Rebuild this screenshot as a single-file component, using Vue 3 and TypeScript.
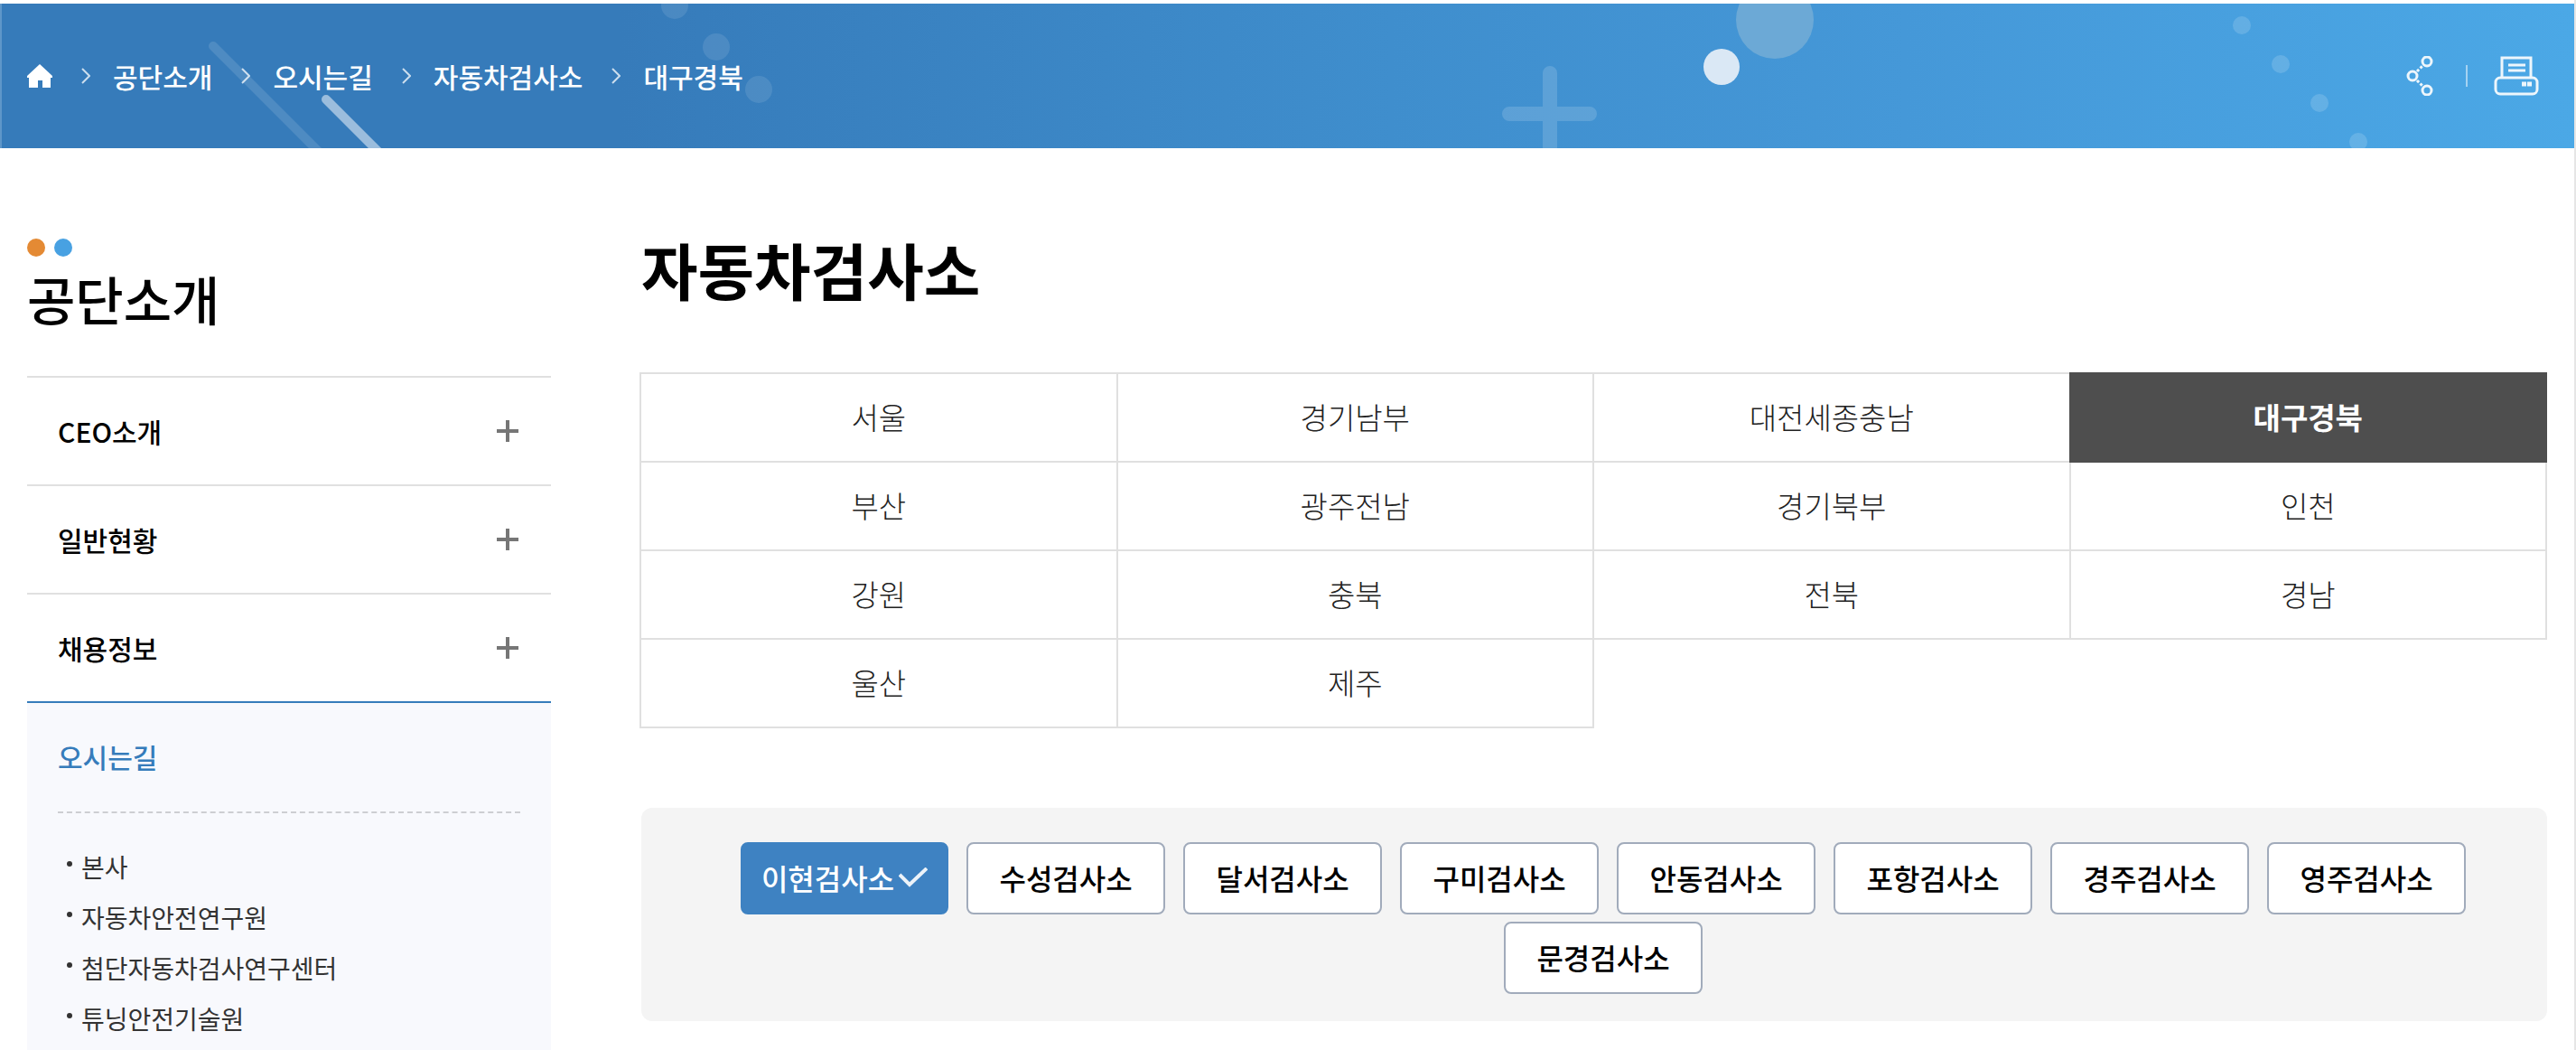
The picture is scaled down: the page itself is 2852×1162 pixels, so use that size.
<script setup lang="ts">
import { ref } from 'vue'

interface MenuItem {
  label: string
  href: string
}

const crumbs: string[] = ['공단소개', '오시는길', '자동차검사소', '대구경북']

const menu: MenuItem[] = [
  { label: 'CEO소개', href: '#ceo' },
  { label: '일반현황', href: '#status' },
  { label: '채용정보', href: '#recruit' },
]

const locations: string[] = ['본사', '자동차안전연구원', '첨단자동차검사연구센터', '튜닝안전기술원']

const regions: string[] = [
  '서울', '경기남부', '대전세종충남', '대구경북',
  '부산', '광주전남', '경기북부', '인천',
  '강원', '충북', '전북', '경남',
  '울산', '제주',
]
const activeRegion = ref('대구경북')

const stations: string[] = [
  '이현검사소', '수성검사소', '달서검사소', '구미검사소', '안동검사소',
  '포항검사소', '경주검사소', '영주검사소', '문경검사소',
]
const activeStation = ref('이현검사소')
</script>

<template>
  <div class="page">
    <header class="banner">
      <svg class="decor" viewBox="2 0 2848 160" preserveAspectRatio="xMidYMid slice" aria-hidden="true">
        <g fill="none" stroke="#fff" stroke-width="10" stroke-linecap="round">
          <path d="M236 47 L356 167" opacity=".12" />
          <path d="M361 106 L421 166" opacity=".5" />
        </g>
        <g fill="#fff" opacity=".1">
          <circle cx="747" cy="2" r="15" />
          <circle cx="793" cy="48" r="15" />
          <circle cx="840" cy="95" r="15" />
        </g>
        <path d="M1671 122 H1760 M1716 77 V180" fill="none" stroke="#fff" stroke-width="16" stroke-linecap="round" opacity=".15" />
        <circle cx="1965" cy="18" r="43" fill="#6ca9d6" />
        <circle cx="1906" cy="70" r="20" fill="#dae8f5" />
        <g fill="#fff" opacity=".15">
          <circle cx="2482" cy="24" r="10" />
          <circle cx="2525" cy="67" r="10" />
          <circle cx="2568" cy="110" r="10" />
          <circle cx="2611" cy="153" r="10" />
        </g>
      </svg>

      <nav class="crumbs" aria-label="breadcrumb">
        <a href="#home" class="home" aria-label="홈">
          <svg width="28" height="26" viewBox="0 0 28 26" aria-hidden="true">
            <path d="M14 0 L28 13 V15 H26 V26 H17 V18 H12 V26 H2 V15 H0 V13 Z" fill="#fff" />
          </svg>
        </a>
        <template v-for="crumb in crumbs" :key="crumb">
          <svg class="chevron" width="10" height="18" viewBox="0 0 10 18" aria-hidden="true">
            <path d="M1 1 L9 9 L1 17" fill="none" stroke="#fff" stroke-width="2" opacity=".75" />
          </svg>
          <a href="#crumb" class="crumb">{{ crumb }}</a>
        </template>
      </nav>

      <div class="tools">
        <button type="button" class="tool" aria-label="공유">
          <svg width="30" height="44" viewBox="0 0 30 44" fill="none" stroke="#fff" stroke-width="3" opacity=".9" aria-hidden="true">
            <circle cx="23" cy="6" r="5" />
            <circle cx="7" cy="22" r="5" />
            <circle cx="23" cy="38" r="5" />
            <path d="M12 17 L18 11 M12 27 L18 33" stroke-dasharray="3 2" />
          </svg>
        </button>
        <span class="bar"></span>
        <button type="button" class="tool" aria-label="인쇄">
          <svg width="50" height="44" viewBox="0 0 50 44" fill="none" stroke="#fff" stroke-width="3" opacity=".9" aria-hidden="true">
            <path d="M9 24 V2 H41 V24" />
            <path d="M16 10 H35 M16 16 H35" />
            <rect x="2" y="24" width="46" height="18" rx="5" />
            <path d="M31 31 H36 M37 31 H42" stroke-width="5" />
          </svg>
        </button>
      </div>
    </header>

    <div class="body">
      <aside class="side">
        <div class="dots"><span class="dot orange"></span><span class="dot blue"></span></div>
        <h2 class="side-title">공단소개</h2>
        <nav class="menu">
          <a v-for="item in menu" :key="item.label" :href="item.href" class="menu-item">
            {{ item.label }}
            <svg width="24" height="24" viewBox="0 0 24 24" aria-hidden="true">
              <path d="M12 0 V24 M0 12 H24" stroke="#767676" stroke-width="4" />
            </svg>
          </a>
          <div class="open">
            <a href="#way" class="open-title">오시는길</a>
            <ul class="sub">
              <li v-for="place in locations" :key="place"><a href="#place">{{ place }}</a></li>
            </ul>
          </div>
        </nav>
      </aside>

      <main class="main">
        <h1 class="title">자동차검사소</h1>
        <ul class="regions">
          <li v-for="region in regions" :key="region" :class="{ on: region === activeRegion }">
            <button type="button" @click="activeRegion = region">{{ region }}</button>
          </li>
        </ul>
        <div class="stations">
          <button
            v-for="station in stations"
            :key="station"
            type="button"
            class="station"
            :class="{ on: station === activeStation }"
            @click="activeStation = station"
          >
            {{ station }}
            <svg v-if="station === activeStation" width="32" height="22" viewBox="0 0 32 22" aria-hidden="true">
              <path d="M1 8 L12 19 L31 1" fill="none" stroke="#fff" stroke-width="4" opacity=".9" />
            </svg>
          </button>
        </div>
      </main>
    </div>
  </div>
</template>

<style>
body {
  margin: 0;
  background: #fff;
}
</style>

<style scoped>
.page {
  box-sizing: border-box;
  min-height: 100vh;
  display: flex;
  flex-direction: column;
  padding-top: 4px;
  border-right: 2px solid #e6e6e6;
  font-family: "Noto Sans CJK KR", sans-serif;
  color: #000;
}
a {
  color: inherit;
  text-decoration: none;
}
button {
  font: inherit;
  color: inherit;
  cursor: pointer;
}
ul {
  list-style: none;
  margin: 0;
  padding: 0;
}
svg {
  display: block;
  flex: none;
}

.banner {
  box-sizing: border-box;
  position: relative;
  height: 160px;
  padding: 0 39px 0 28px;
  border-left: 2px solid #5e96c9;
  display: flex;
  align-items: center;
  justify-content: space-between;
  color: #fff;
  background: linear-gradient(90deg, #367bba 0%, #367bba 24%, #3f8ecd 54%, #4598d8 74%, #4ba8e6 100%);
}
.decor {
  position: absolute;
  inset: 0;
  width: 100%;
  height: 100%;
}
.crumbs,
.tools {
  position: relative;
  display: flex;
  align-items: center;
}
.chevron {
  margin: 0 25px 0 32px;
}
.crumb {
  font-size: 30px;
  line-height: 44px;
  font-weight: 500;
}
.tool {
  padding: 0;
  border: 0;
  background: none;
}
.bar {
  width: 2px;
  height: 24px;
  margin: 0 29px 0 36px;
  background: rgba(255, 255, 255, 0.5);
}

.body {
  flex: 1;
  display: flex;
  gap: 98px;
  padding: 0 30px;
}
.side {
  width: 580px;
  flex: none;
  display: flex;
  flex-direction: column;
  padding-top: 100px;
}
.dots {
  display: flex;
  gap: 10px;
}
.dot {
  width: 20px;
  height: 20px;
  border-radius: 50%;
}
.orange {
  background: #e48a34;
}
.blue {
  background: #48a1e2;
}
.side-title {
  margin: 4px 0 44px;
  font-size: 58px;
  line-height: 84px;
  font-weight: 500;
}
.menu {
  flex: 1;
  display: flex;
  flex-direction: column;
  font-size: 30px;
  line-height: 44px;
  font-weight: 500;
}
.menu-item {
  display: flex;
  align-items: center;
  justify-content: space-between;
  padding: 37px 36px 37px 34px;
  border-top: 2px solid #e0e0e0;
}
.open {
  flex: 1;
  padding: 0 34px 10px;
  border-top: 2px solid #367cbb;
  background: #f8f9fd;
}
.open-title {
  display: block;
  padding: 37px 0 39px;
  border-bottom: 2px dashed #cdced2;
  color: #367cbb;
}
.sub {
  padding: 31px 0 0 26px;
  font-size: 28px;
  line-height: 56px;
  font-weight: 400;
  color: #333;
}
.sub li {
  position: relative;
}
.sub li::before {
  content: "";
  position: absolute;
  left: -16px;
  top: 22px;
  width: 6px;
  height: 6px;
  border-radius: 50%;
  background: #333;
}

.main {
  flex: 1;
  padding-top: 84px;
}
.title {
  margin: 0 2px 64px;
  font-size: 68px;
  line-height: 100px;
  font-weight: 700;
}
.regions {
  display: grid;
  grid-template-columns: repeat(4, 1fr);
  padding: 2px 0 0 2px;
  font-size: 33px;
  line-height: 48px;
  font-weight: 300;
  color: #222;
}
.regions li {
  margin: -2px 0 0 -2px;
  border: 2px solid #e0e0e0;
}
.regions button {
  width: 100%;
  padding: 23px 0 25px;
  border: 0;
  background: none;
}
.regions .on {
  position: relative;
  border-color: #4e4e4e;
  background: #4e4e4e;
  color: #fff;
  font-weight: 700;
}
.stations {
  display: flex;
  flex-wrap: wrap;
  justify-content: center;
  row-gap: 8px;
  margin: 88px 0 32px 2px;
  padding: 38px 0 30px;
  border-radius: 12px;
  background: #f4f4f4;
}
.station {
  display: flex;
  align-items: center;
  justify-content: center;
  gap: 5px;
  min-width: 220px;
  margin-left: 20px;
  padding: 13px 32px 15px;
  border: 2px solid #a1abbb;
  border-radius: 8px;
  background: #fff;
  font-size: 32px;
  line-height: 48px;
  font-weight: 500;
}
.station.on {
  padding: 13px 21px 15px;
  border-color: #3e82c2;
  background: #3e82c2;
  color: #fff;
}
</style>
